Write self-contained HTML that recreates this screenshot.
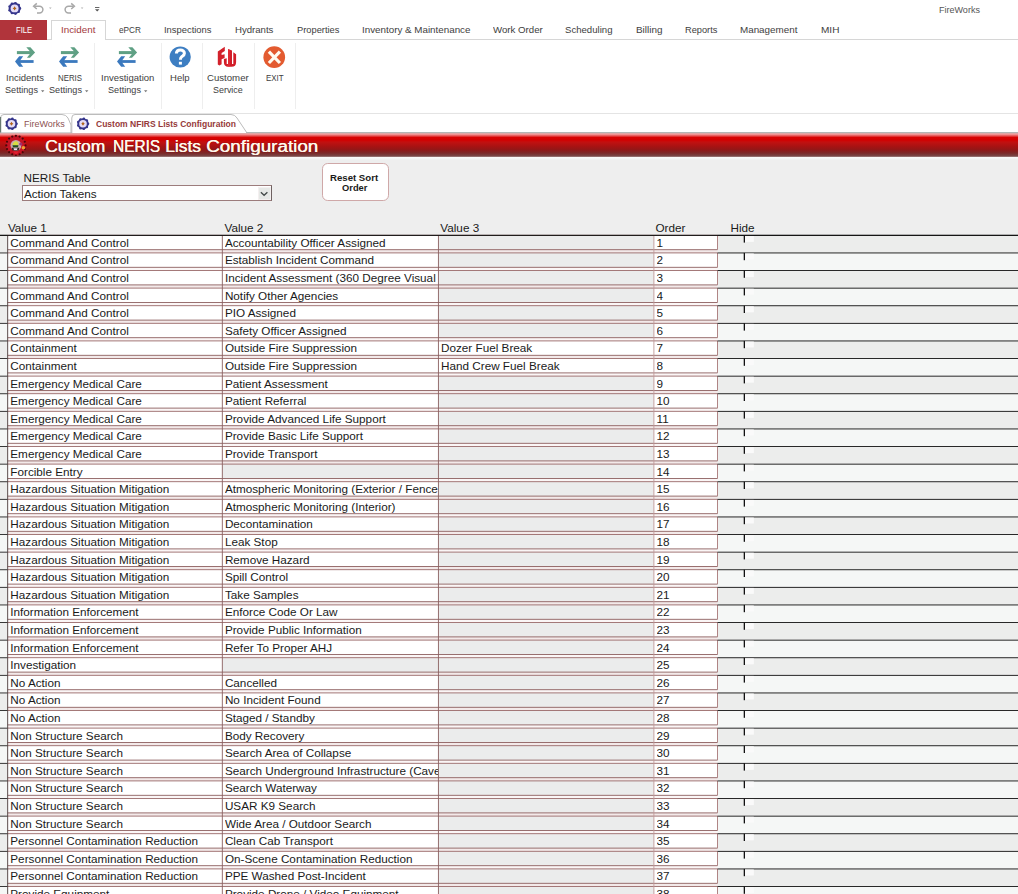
<!DOCTYPE html><html><head><meta charset="utf-8"><style>
*{margin:0;padding:0;box-sizing:border-box}
html,body{width:1018px;height:894px;overflow:hidden;background:#fff;font-family:"Liberation Sans",sans-serif}
.a{position:absolute;white-space:nowrap}
.sep{position:absolute;width:1px;background:#eeeeee;top:43px;height:66px}
</style></head><body>
<svg class="a" style="left:0;top:0" width="110" height="20" viewBox="0 0 110 20"><circle cx="14.6" cy="8.4" r="5.94" fill="#36368c"/><circle cx="19.88" cy="8.40" r="1.32" fill="#36368c"/><circle cx="18.64" cy="11.79" r="1.32" fill="#36368c"/><circle cx="15.52" cy="13.60" r="1.32" fill="#36368c"/><circle cx="11.96" cy="12.97" r="1.32" fill="#36368c"/><circle cx="9.64" cy="10.21" r="1.32" fill="#36368c"/><circle cx="9.64" cy="6.59" r="1.32" fill="#36368c"/><circle cx="11.96" cy="3.83" r="1.32" fill="#36368c"/><circle cx="15.52" cy="3.20" r="1.32" fill="#36368c"/><circle cx="18.64" cy="5.01" r="1.32" fill="#36368c"/><circle cx="14.6" cy="8.4" r="3.96" fill="#e4dcf6"/><path d="M14.6 6.29 L15.92 8.4 L14.6 10.51 L13.28 8.4z" fill="#b0641c"/><path d="M12.49 8.4 L14.6 7.61 L16.71 8.4 L14.6 9.19z" fill="#b0641c"/><path d="M34.5 6.2 h5 a3.4 3.4 0 0 1 0 6.8 h-2.5" fill="none" stroke="#a8a8a8" stroke-width="1.5"/><path d="M36.8 3.4 L33.6 6.2 L36.8 9" stroke="#a8a8a8" stroke-width="1.5" fill="none"/><path d="M49 7.6 h2.6 l-1.3 1.4z" fill="#b0b0b0"/><path d="M73.5 6.2 h-5 a3.4 3.4 0 0 0 0 6.8 h2.5" fill="none" stroke="#a8a8a8" stroke-width="1.5"/><path d="M71.2 3.4 L74.4 6.2 L71.2 9" stroke="#a8a8a8" stroke-width="1.5" fill="none"/><path d="M80.8 7.6 h2.6 l-1.3 1.4z" fill="#b0b0b0"/><rect x="95" y="7" width="4.4" height="0.9" fill="#555"/><path d="M95 9.2 h4.4 l-2.2 2.2z" fill="#555"/></svg>
<div class="a" style="left:938.80px;top:5.10px;font-size:9.5px;line-height:10.611px;color:#555;transform:scaleX(0.9489);transform-origin:0 0">FireWorks</div>
<div class="a" style="left:0;top:20px;width:47px;height:19.5px;background:#b1343b"></div>
<div class="a" style="left:15.70px;top:25.10px;font-size:9.5px;line-height:10.611px;color:#fff;transform:scaleX(0.8075);transform-origin:0 0">FILE</div>
<div class="a" style="left:47px;top:39px;width:971px;height:1px;background:#d6d6d6"></div>
<div class="a" style="left:50.5px;top:20.3px;width:55.8px;height:20px;border:1px solid #d6d6d6;border-bottom:none;background:#fff"></div>
<div class="a" style="left:60.60px;top:25.03px;font-size:9.8px;line-height:10.947px;color:#a3393b;transform:scaleX(1.0022);transform-origin:0 0">Incident</div>
<div class="a" style="left:118.60px;top:25.03px;font-size:9.8px;line-height:10.947px;color:#3e3e3e;transform:scaleX(0.8416);transform-origin:0 0">ePCR</div>
<div class="a" style="left:164.40px;top:25.03px;font-size:9.8px;line-height:10.947px;color:#3e3e3e;transform:scaleX(0.9582);transform-origin:0 0">Inspections</div>
<div class="a" style="left:235.00px;top:25.03px;font-size:9.8px;line-height:10.947px;color:#3e3e3e;transform:scaleX(0.9792);transform-origin:0 0">Hydrants</div>
<div class="a" style="left:296.80px;top:25.03px;font-size:9.8px;line-height:10.947px;color:#3e3e3e;transform:scaleX(0.9493);transform-origin:0 0">Properties</div>
<div class="a" style="left:362.00px;top:25.03px;font-size:9.8px;line-height:10.947px;color:#3e3e3e;transform:scaleX(1.0008);transform-origin:0 0">Inventory &amp; Maintenance</div>
<div class="a" style="left:493.20px;top:25.03px;font-size:9.8px;line-height:10.947px;color:#3e3e3e;transform:scaleX(0.9869);transform-origin:0 0">Work Order</div>
<div class="a" style="left:565.00px;top:25.03px;font-size:9.8px;line-height:10.947px;color:#3e3e3e;transform:scaleX(0.9795);transform-origin:0 0">Scheduling</div>
<div class="a" style="left:636.20px;top:25.03px;font-size:9.8px;line-height:10.947px;color:#3e3e3e;transform:scaleX(1.0097);transform-origin:0 0">Billing</div>
<div class="a" style="left:685.30px;top:25.03px;font-size:9.8px;line-height:10.947px;color:#3e3e3e;transform:scaleX(0.9442);transform-origin:0 0">Reports</div>
<div class="a" style="left:740.40px;top:25.03px;font-size:9.8px;line-height:10.947px;color:#3e3e3e;transform:scaleX(1.0035);transform-origin:0 0">Management</div>
<div class="a" style="left:820.50px;top:25.03px;font-size:9.8px;line-height:10.947px;color:#3e3e3e;transform:scaleX(1.0243);transform-origin:0 0">MIH</div>
<div class="sep" style="left:94.3px"></div>
<div class="sep" style="left:160.7px"></div>
<div class="sep" style="left:201.9px"></div>
<div class="sep" style="left:253.7px"></div>
<div class="sep" style="left:294.6px"></div>
<svg class="a" style="left:0px;top:0" width="40" height="70" viewBox="0 0 40 70"><rect x="16.9" y="51.1" width="15" height="3" fill="#5fa084"/><path d="M26.3 47.2 L30.4 47.2 L35.1 52.6 L30.0 57.8 L26.9 57.8 L31.0 52.6z" fill="#5fa084"/><rect x="18.5" y="60.1" width="15.1" height="2.8" fill="#3b79be"/><path d="M23.2 56.3 L19.2 56.3 L15 61.5 L19.2 66.7 L23.2 66.7 L19.4 61.5z" fill="#3b79be"/></svg>
<svg class="a" style="left:44px;top:0" width="40" height="70" viewBox="0 0 40 70"><rect x="16.9" y="51.1" width="15" height="3" fill="#5fa084"/><path d="M26.3 47.2 L30.4 47.2 L35.1 52.6 L30.0 57.8 L26.9 57.8 L31.0 52.6z" fill="#5fa084"/><rect x="18.5" y="60.1" width="15.1" height="2.8" fill="#3b79be"/><path d="M23.2 56.3 L19.2 56.3 L15 61.5 L19.2 66.7 L23.2 66.7 L19.4 61.5z" fill="#3b79be"/></svg>
<svg class="a" style="left:101.7px;top:0" width="40" height="70" viewBox="0 0 40 70"><rect x="16.9" y="51.1" width="15" height="3" fill="#5fa084"/><path d="M26.3 47.2 L30.4 47.2 L35.1 52.6 L30.0 57.8 L26.9 57.8 L31.0 52.6z" fill="#5fa084"/><rect x="18.5" y="60.1" width="15.1" height="2.8" fill="#3b79be"/><path d="M23.2 56.3 L19.2 56.3 L15 61.5 L19.2 66.7 L23.2 66.7 L19.4 61.5z" fill="#3b79be"/></svg>
<svg class="a" style="left:0;top:0" width="300" height="70" viewBox="0 0 300 70"><circle cx="180.2" cy="57" r="10.6" fill="#3d7ec2"/><path d="M176.4 53.6 C176.4 51 178.3 49.9 180.4 49.9 C182.7 49.9 184.4 51.3 184.4 53.2 C184.4 55.2 182.9 55.8 181.9 56.5 C180.9 57.2 180.4 57.8 180.4 59.8" fill="none" stroke="#fff" stroke-width="3"/><rect x="178.9" y="61.8" width="3" height="2.8" fill="#fff"/><path d="M217.8 51.6 L224.8 46.8 L224.8 50.9 L221.6 52.9 L221.6 55.1 L224.6 54.3 L224.6 58 L221.6 59.2 L221.6 64.2 L219.4 65.6 L217.8 64.6 Z" fill="#d3212b"/><path d="M223.9 59 L226.7 58.3 L226.7 64 L228 64 L228 48.9 L232 50.6 L232 64 L233.3 64 L233.3 52.3 L236.1 54.2 L236.1 62.2 Q236.1 66.7 231.5 66.7 L228.3 66.7 Q223.9 66.7 223.9 62.3 Z" fill="#d21d28"/><path d="M228 48.9 L230 49.7 L230 66.7 L228.3 66.7 Q226 66.7 228 64z" fill="#e8323a" opacity="0.6"/><circle cx="274.25" cy="57.2" r="10.85" fill="#e35b30"/><path d="M268.9 51.7 L279.9 63 M279.9 51.7 L268.9 63" stroke="#fffbf0" stroke-width="3.2"/></svg>
<div class="a" style="left:5.70px;top:73.43px;font-size:9.8px;line-height:10.947px;color:#3e3e3e;transform:scaleX(0.9688);transform-origin:0 0">Incidents</div>
<div class="a" style="left:4.90px;top:85.23px;font-size:9.8px;line-height:10.947px;color:#3e3e3e;transform:scaleX(0.9319);transform-origin:0 0">Settings</div>
<svg class="a" style="left:41.3px;top:90px" width="4" height="3" viewBox="0 0 4 3"><path d="M0 0.3 H3.4 L1.7 2.2z" fill="#777"/></svg>
<div class="a" style="left:57.50px;top:73.43px;font-size:9.8px;line-height:10.947px;color:#3e3e3e;transform:scaleX(0.8013);transform-origin:0 0">NERIS</div>
<div class="a" style="left:49.10px;top:85.23px;font-size:9.8px;line-height:10.947px;color:#3e3e3e;transform:scaleX(0.9319);transform-origin:0 0">Settings</div>
<svg class="a" style="left:85.2px;top:90px" width="4" height="3" viewBox="0 0 4 3"><path d="M0 0.3 H3.4 L1.7 2.2z" fill="#777"/></svg>
<div class="a" style="left:100.60px;top:73.43px;font-size:9.8px;line-height:10.947px;color:#3e3e3e;transform:scaleX(0.9705);transform-origin:0 0">Investigation</div>
<div class="a" style="left:107.70px;top:85.23px;font-size:9.8px;line-height:10.947px;color:#3e3e3e;transform:scaleX(0.9319);transform-origin:0 0">Settings</div>
<svg class="a" style="left:143.8px;top:90px" width="4" height="3" viewBox="0 0 4 3"><path d="M0 0.3 H3.4 L1.7 2.2z" fill="#777"/></svg>
<div class="a" style="left:170.40px;top:73.43px;font-size:9.8px;line-height:10.947px;color:#3e3e3e;transform:scaleX(0.9725);transform-origin:0 0">Help</div>
<div class="a" style="left:206.60px;top:73.43px;font-size:9.8px;line-height:10.947px;color:#3e3e3e;transform:scaleX(0.9817);transform-origin:0 0">Customer</div>
<div class="a" style="left:212.90px;top:85.23px;font-size:9.8px;line-height:10.947px;color:#3e3e3e;transform:scaleX(0.9119);transform-origin:0 0">Service</div>
<div class="a" style="left:265.90px;top:73.43px;font-size:9.8px;line-height:10.947px;color:#3e3e3e;transform:scaleX(0.8126);transform-origin:0 0">EXIT</div>
<div class="a" style="left:0;top:113px;width:1018px;height:1px;background:#e4e4e4"></div>
<svg class="a" style="left:0;top:0" width="260" height="140" viewBox="0 0 260 140"><path d="M0.5 133 L0.5 118 Q0.5 114.5 4 114.5 L62 114.5 Q66 114.5 68 118 L71 125 L71 133" fill="#fff" stroke="#bcbcbc" stroke-width="1"/><path d="M71.8 133 L71.8 118 Q71.8 114.5 75 114.5 L231 114.5 Q235 114.5 237 118 L247 133" fill="#fff" stroke="#bcbcbc" stroke-width="1"/><rect x="0" y="117" width="1.2" height="16" fill="#6a7a72"/><rect x="0" y="132.4" width="72" height="1" fill="#b8b8b8"/><circle cx="11.5" cy="123.8" r="5.67" fill="#36368c"/><circle cx="16.54" cy="123.80" r="1.26" fill="#36368c"/><circle cx="15.36" cy="127.04" r="1.26" fill="#36368c"/><circle cx="12.38" cy="128.76" r="1.26" fill="#36368c"/><circle cx="8.98" cy="128.16" r="1.26" fill="#36368c"/><circle cx="6.76" cy="125.52" r="1.26" fill="#36368c"/><circle cx="6.76" cy="122.08" r="1.26" fill="#36368c"/><circle cx="8.98" cy="119.44" r="1.26" fill="#36368c"/><circle cx="12.38" cy="118.84" r="1.26" fill="#36368c"/><circle cx="15.36" cy="120.56" r="1.26" fill="#36368c"/><circle cx="11.5" cy="123.8" r="3.78" fill="#e4dcf6"/><path d="M11.5 121.78 L12.76 123.8 L11.5 125.82 L10.24 123.8z" fill="#b0641c"/><path d="M9.48 123.8 L11.5 123.04 L13.52 123.8 L11.5 124.56z" fill="#b0641c"/><circle cx="83" cy="123.8" r="5.67" fill="#36368c"/><circle cx="88.04" cy="123.80" r="1.26" fill="#36368c"/><circle cx="86.86" cy="127.04" r="1.26" fill="#36368c"/><circle cx="83.88" cy="128.76" r="1.26" fill="#36368c"/><circle cx="80.48" cy="128.16" r="1.26" fill="#36368c"/><circle cx="78.26" cy="125.52" r="1.26" fill="#36368c"/><circle cx="78.26" cy="122.08" r="1.26" fill="#36368c"/><circle cx="80.48" cy="119.44" r="1.26" fill="#36368c"/><circle cx="83.88" cy="118.84" r="1.26" fill="#36368c"/><circle cx="86.86" cy="120.56" r="1.26" fill="#36368c"/><circle cx="83" cy="123.8" r="3.78" fill="#e4dcf6"/><path d="M83 121.78 L84.26 123.8 L83 125.82 L81.74 123.8z" fill="#b0641c"/><path d="M80.98 123.8 L83 123.04 L85.02 123.8 L83 124.56z" fill="#b0641c"/></svg>
<div class="a" style="left:24.30px;top:118.80px;font-size:9.5px;line-height:10.611px;color:#8e5252;transform:scaleX(0.9466);transform-origin:0 0">FireWorks</div>
<div class="a" style="left:95.60px;top:119.51px;font-size:8.5px;line-height:9.495px;color:#963a3a;font-weight:bold;transform:scaleX(1.0016);transform-origin:0 0">Custom NFIRS Lists Configuration</div>
<div class="a" style="left:0;top:157px;width:1018px;height:737px;background:linear-gradient(#fbfbfb 0px,#f4f4f4 2px,#eeeeee 3px)"></div>
<div class="a" style="left:246px;top:132.2px;width:772px;height:1px;background:#b4b4b4"></div>
<div class="a" style="left:0;top:133.3px;width:1018px;height:23.7px;background:linear-gradient(#d8b0b0 0px,#f09090 1.5px,#d80202 4.5px,#d20000 7px,#c21010 9px,#aa1212 13px,#901818 17px,#7c2828 20px,#7a4242 22.5px,#a08080 24px)"></div>
<svg class="a" style="left:0;top:130px" width="34" height="30" viewBox="0 130 34 30"><circle cx="15.9" cy="145.4" r="10.2" fill="#c41424"/><circle cx="25.50" cy="145.40" r="1.1" fill="#4a0808"/><circle cx="24.77" cy="149.07" r="1.1" fill="#4a0808"/><circle cx="22.69" cy="152.19" r="1.1" fill="#4a0808"/><circle cx="19.57" cy="154.27" r="1.1" fill="#4a0808"/><circle cx="15.90" cy="155.00" r="1.1" fill="#4a0808"/><circle cx="12.23" cy="154.27" r="1.1" fill="#4a0808"/><circle cx="9.11" cy="152.19" r="1.1" fill="#4a0808"/><circle cx="7.03" cy="149.07" r="1.1" fill="#4a0808"/><circle cx="6.30" cy="145.40" r="1.1" fill="#4a0808"/><circle cx="7.03" cy="141.73" r="1.1" fill="#4a0808"/><circle cx="9.11" cy="138.61" r="1.1" fill="#4a0808"/><circle cx="12.23" cy="136.53" r="1.1" fill="#4a0808"/><circle cx="15.90" cy="135.80" r="1.1" fill="#4a0808"/><circle cx="19.57" cy="136.53" r="1.1" fill="#4a0808"/><circle cx="22.69" cy="138.61" r="1.1" fill="#4a0808"/><circle cx="24.77" cy="141.73" r="1.1" fill="#4a0808"/><circle cx="15.9" cy="145.4" r="5.4" fill="#c8a8b0"/><path d="M12.3 145 Q13.5 140.6 17.2 141.5 Q19 142.8 18.2 145z" fill="#d8dc40"/><path d="M12.5 145.3 L18.5 145.3 L18 147.2 L13 147.2z" fill="#205018"/><path d="M11.5 147.8 L19.5 147.8 L18.5 150.5 L12.5 150.5z" fill="#302020"/><path d="M13.5 148.3 L17.5 148.3 L17 150 L14 150z" fill="#e8e0f0"/><circle cx="20.8" cy="144" r="1.6" fill="#a03070"/><circle cx="23.4" cy="147.8" r="1.8" fill="#f0a030"/><path d="M13 151.5 L19 151.5 L16 155z" fill="#e02030"/></svg>
<div class="a" style="left:45.10px;top:138.12px;font-size:16px;line-height:17.872px;color:#fff8ec;transform:scaleX(1.0902);transform-origin:0 0;text-shadow:0.35px 0 0 #fff8ec,0 0 1px rgba(90,0,0,.5)">Custom</div>
<div class="a" style="left:112.80px;top:138.12px;font-size:16px;line-height:17.872px;color:#fff8ec;transform:scaleX(0.9591);transform-origin:0 0;text-shadow:0.35px 0 0 #fff8ec,0 0 1px rgba(90,0,0,.5)">NERIS</div>
<div class="a" style="left:165.20px;top:138.12px;font-size:16px;line-height:17.872px;color:#fff8ec;transform:scaleX(1.0882);transform-origin:0 0;text-shadow:0.35px 0 0 #fff8ec,0 0 1px rgba(90,0,0,.5)">Lists</div>
<div class="a" style="left:205.60px;top:138.12px;font-size:16px;line-height:17.872px;color:#fff8ec;transform:scaleX(1.1779);transform-origin:0 0;text-shadow:0.35px 0 0 #fff8ec,0 0 1px rgba(90,0,0,.5)">Configuration</div>
<div class="a" style="left:23.60px;top:171.38px;font-size:11.73px;line-height:13.102px;color:#1a1a1a">NERIS Table</div>
<div class="a" style="left:22.4px;top:185.2px;width:249.4px;height:15.6px;border:1px solid #9c7c7c;border-right-color:#6e6262;background:#fff"></div>
<div class="a" style="left:23.90px;top:186.68px;font-size:11.73px;line-height:13.102px;color:#1a1a1a">Action Takens</div>
<div class="a" style="left:257.8px;top:186.6px;width:13px;height:13.2px;background:#e6e8e6;border:1px solid #f4f0f0"></div>
<svg class="a" style="left:0;top:0" width="280" height="205" viewBox="0 0 280 205"><path d="M260.9 192.3 L264.1 195.3 L267.4 192.3" fill="none" stroke="#424848" stroke-width="1.3"/></svg>
<div class="a" style="left:321.8px;top:163.2px;width:66.8px;height:38.2px;border:1px solid #cfa8a8;border-radius:5.7px;background:#fff"></div>
<div class="a" style="left:329.90px;top:172.90px;font-size:9.5px;line-height:10.611px;color:#1a1a1a;font-weight:bold;transform:scaleX(1.0123);transform-origin:0 0">Reset Sort</div>
<div class="a" style="left:341.60px;top:182.80px;font-size:9.5px;line-height:10.611px;color:#1a1a1a;font-weight:bold;transform:scaleX(0.9818);transform-origin:0 0">Order</div>
<div class="a" style="left:7.90px;top:220.58px;font-size:11.73px;line-height:13.102px;color:#1a1a1a">Value 1</div>
<div class="a" style="left:224.50px;top:220.58px;font-size:11.73px;line-height:13.102px;color:#1a1a1a">Value 2</div>
<div class="a" style="left:440.30px;top:220.58px;font-size:11.73px;line-height:13.102px;color:#1a1a1a">Value 3</div>
<div class="a" style="left:655.50px;top:220.58px;font-size:11.73px;line-height:13.102px;color:#1a1a1a">Order</div>
<div class="a" style="left:730.50px;top:220.58px;font-size:11.73px;line-height:13.102px;color:#1a1a1a">Hide</div>
<svg class="a" style="left:0;top:0" width="1018" height="894" viewBox="0 0 1018 894"><rect x="0" y="235.30" width="1018" height="17.60" fill="#ecedec"/><rect x="0" y="252.90" width="1018" height="17.60" fill="#f5f7f6"/><rect x="0" y="270.50" width="1018" height="17.60" fill="#ecedec"/><rect x="0" y="288.10" width="1018" height="17.60" fill="#f5f7f6"/><rect x="0" y="305.70" width="1018" height="17.60" fill="#ecedec"/><rect x="0" y="323.30" width="1018" height="17.60" fill="#f5f7f6"/><rect x="0" y="340.90" width="1018" height="17.60" fill="#ecedec"/><rect x="0" y="358.50" width="1018" height="17.60" fill="#f5f7f6"/><rect x="0" y="376.10" width="1018" height="17.60" fill="#ecedec"/><rect x="0" y="393.70" width="1018" height="17.60" fill="#f5f7f6"/><rect x="0" y="411.30" width="1018" height="17.60" fill="#ecedec"/><rect x="0" y="428.90" width="1018" height="17.60" fill="#f5f7f6"/><rect x="0" y="446.50" width="1018" height="17.60" fill="#ecedec"/><rect x="0" y="464.10" width="1018" height="17.60" fill="#f5f7f6"/><rect x="0" y="481.70" width="1018" height="17.60" fill="#ecedec"/><rect x="0" y="499.30" width="1018" height="17.60" fill="#f5f7f6"/><rect x="0" y="516.90" width="1018" height="17.60" fill="#ecedec"/><rect x="0" y="534.50" width="1018" height="17.60" fill="#f5f7f6"/><rect x="0" y="552.10" width="1018" height="17.60" fill="#ecedec"/><rect x="0" y="569.70" width="1018" height="17.60" fill="#f5f7f6"/><rect x="0" y="587.30" width="1018" height="17.60" fill="#ecedec"/><rect x="0" y="604.90" width="1018" height="17.60" fill="#f5f7f6"/><rect x="0" y="622.50" width="1018" height="17.60" fill="#ecedec"/><rect x="0" y="640.10" width="1018" height="17.60" fill="#f5f7f6"/><rect x="0" y="657.70" width="1018" height="17.60" fill="#ecedec"/><rect x="0" y="675.30" width="1018" height="17.60" fill="#f5f7f6"/><rect x="0" y="692.90" width="1018" height="17.60" fill="#ecedec"/><rect x="0" y="710.50" width="1018" height="17.60" fill="#f5f7f6"/><rect x="0" y="728.10" width="1018" height="17.60" fill="#ecedec"/><rect x="0" y="745.70" width="1018" height="17.60" fill="#f5f7f6"/><rect x="0" y="763.30" width="1018" height="17.60" fill="#ecedec"/><rect x="0" y="780.90" width="1018" height="17.60" fill="#f5f7f6"/><rect x="0" y="798.50" width="1018" height="17.60" fill="#ecedec"/><rect x="0" y="816.10" width="1018" height="17.60" fill="#f5f7f6"/><rect x="0" y="833.70" width="1018" height="17.60" fill="#ecedec"/><rect x="0" y="851.30" width="1018" height="17.60" fill="#f5f7f6"/><rect x="0" y="868.90" width="1018" height="17.60" fill="#ecedec"/><rect x="0" y="886.50" width="1018" height="17.60" fill="#f5f7f6"/><rect x="7.7" y="249.70" width="709.8" height="3.20" fill="#f3e9e9"/><rect x="7.70" y="235.30" width="214.60" height="14.40" fill="#ffffff"/><rect x="222.30" y="235.30" width="216.10" height="14.40" fill="#ffffff"/><rect x="438.40" y="235.30" width="215.50" height="14.40" fill="#ebecec"/><rect x="653.90" y="235.30" width="63.60" height="14.40" fill="#ffffff"/><rect x="7.70" y="234.85" width="709.80" height="0.9" fill="#9a6a6a"/><rect x="7.70" y="249.25" width="709.80" height="0.9" fill="#8e6060"/><rect x="717.05" y="235.30" width="0.9" height="14.40" fill="#a87878"/><rect x="0" y="234.90" width="7.70" height="0.9" fill="#222"/><rect x="717.50" y="234.90" width="300.50" height="0.9" fill="#111"/><rect x="744.8" y="235.90" width="9" height="6" fill="#fafafa"/><rect x="743.7" y="235.30" width="1.3" height="7.3" fill="#111"/><rect x="7.7" y="267.30" width="709.8" height="3.20" fill="#fbf6f6"/><rect x="7.70" y="252.90" width="214.60" height="14.40" fill="#ffffff"/><rect x="222.30" y="252.90" width="216.10" height="14.40" fill="#ffffff"/><rect x="438.40" y="252.90" width="215.50" height="14.40" fill="#ebecec"/><rect x="653.90" y="252.90" width="63.60" height="14.40" fill="#ffffff"/><rect x="7.70" y="252.45" width="709.80" height="0.9" fill="#9a6a6a"/><rect x="7.70" y="266.85" width="709.80" height="0.9" fill="#8e6060"/><rect x="717.05" y="252.90" width="0.9" height="14.40" fill="#a87878"/><rect x="0" y="252.50" width="7.70" height="0.9" fill="#222"/><rect x="717.50" y="252.50" width="300.50" height="0.9" fill="#111"/><rect x="744.8" y="253.50" width="9" height="6" fill="#fafafa"/><rect x="743.7" y="252.90" width="1.3" height="7.3" fill="#111"/><rect x="7.7" y="284.90" width="709.8" height="3.20" fill="#f3e9e9"/><rect x="7.70" y="270.50" width="214.60" height="14.40" fill="#ffffff"/><rect x="222.30" y="270.50" width="216.10" height="14.40" fill="#ffffff"/><rect x="438.40" y="270.50" width="215.50" height="14.40" fill="#ebecec"/><rect x="653.90" y="270.50" width="63.60" height="14.40" fill="#ffffff"/><rect x="7.70" y="270.05" width="709.80" height="0.9" fill="#9a6a6a"/><rect x="7.70" y="284.45" width="709.80" height="0.9" fill="#8e6060"/><rect x="717.05" y="270.50" width="0.9" height="14.40" fill="#a87878"/><rect x="0" y="270.10" width="7.70" height="0.9" fill="#222"/><rect x="717.50" y="270.10" width="300.50" height="0.9" fill="#111"/><rect x="744.8" y="271.10" width="9" height="6" fill="#fafafa"/><rect x="743.7" y="270.50" width="1.3" height="7.3" fill="#111"/><rect x="7.7" y="302.50" width="709.8" height="3.20" fill="#fbf6f6"/><rect x="7.70" y="288.10" width="214.60" height="14.40" fill="#ffffff"/><rect x="222.30" y="288.10" width="216.10" height="14.40" fill="#ffffff"/><rect x="438.40" y="288.10" width="215.50" height="14.40" fill="#ebecec"/><rect x="653.90" y="288.10" width="63.60" height="14.40" fill="#ffffff"/><rect x="7.70" y="287.65" width="709.80" height="0.9" fill="#9a6a6a"/><rect x="7.70" y="302.05" width="709.80" height="0.9" fill="#8e6060"/><rect x="717.05" y="288.10" width="0.9" height="14.40" fill="#a87878"/><rect x="0" y="287.70" width="7.70" height="0.9" fill="#222"/><rect x="717.50" y="287.70" width="300.50" height="0.9" fill="#111"/><rect x="744.8" y="288.70" width="9" height="6" fill="#fafafa"/><rect x="743.7" y="288.10" width="1.3" height="7.3" fill="#111"/><rect x="7.7" y="320.10" width="709.8" height="3.20" fill="#f3e9e9"/><rect x="7.70" y="305.70" width="214.60" height="14.40" fill="#ffffff"/><rect x="222.30" y="305.70" width="216.10" height="14.40" fill="#ffffff"/><rect x="438.40" y="305.70" width="215.50" height="14.40" fill="#ebecec"/><rect x="653.90" y="305.70" width="63.60" height="14.40" fill="#ffffff"/><rect x="7.70" y="305.25" width="709.80" height="0.9" fill="#9a6a6a"/><rect x="7.70" y="319.65" width="709.80" height="0.9" fill="#8e6060"/><rect x="717.05" y="305.70" width="0.9" height="14.40" fill="#a87878"/><rect x="0" y="305.30" width="7.70" height="0.9" fill="#222"/><rect x="717.50" y="305.30" width="300.50" height="0.9" fill="#111"/><rect x="744.8" y="306.30" width="9" height="6" fill="#fafafa"/><rect x="743.7" y="305.70" width="1.3" height="7.3" fill="#111"/><rect x="7.7" y="337.70" width="709.8" height="3.20" fill="#fbf6f6"/><rect x="7.70" y="323.30" width="214.60" height="14.40" fill="#ffffff"/><rect x="222.30" y="323.30" width="216.10" height="14.40" fill="#ffffff"/><rect x="438.40" y="323.30" width="215.50" height="14.40" fill="#ebecec"/><rect x="653.90" y="323.30" width="63.60" height="14.40" fill="#ffffff"/><rect x="7.70" y="322.85" width="709.80" height="0.9" fill="#9a6a6a"/><rect x="7.70" y="337.25" width="709.80" height="0.9" fill="#8e6060"/><rect x="717.05" y="323.30" width="0.9" height="14.40" fill="#a87878"/><rect x="0" y="322.90" width="7.70" height="0.9" fill="#222"/><rect x="717.50" y="322.90" width="300.50" height="0.9" fill="#111"/><rect x="744.8" y="323.90" width="9" height="6" fill="#fafafa"/><rect x="743.7" y="323.30" width="1.3" height="7.3" fill="#111"/><rect x="7.7" y="355.30" width="709.8" height="3.20" fill="#f3e9e9"/><rect x="7.70" y="340.90" width="214.60" height="14.40" fill="#ffffff"/><rect x="222.30" y="340.90" width="216.10" height="14.40" fill="#ffffff"/><rect x="438.40" y="340.90" width="215.50" height="14.40" fill="#ffffff"/><rect x="653.90" y="340.90" width="63.60" height="14.40" fill="#ffffff"/><rect x="7.70" y="340.45" width="709.80" height="0.9" fill="#9a6a6a"/><rect x="7.70" y="354.85" width="709.80" height="0.9" fill="#8e6060"/><rect x="717.05" y="340.90" width="0.9" height="14.40" fill="#a87878"/><rect x="0" y="340.50" width="7.70" height="0.9" fill="#222"/><rect x="717.50" y="340.50" width="300.50" height="0.9" fill="#111"/><rect x="744.8" y="341.50" width="9" height="6" fill="#fafafa"/><rect x="743.7" y="340.90" width="1.3" height="7.3" fill="#111"/><rect x="7.7" y="372.90" width="709.8" height="3.20" fill="#fbf6f6"/><rect x="7.70" y="358.50" width="214.60" height="14.40" fill="#ffffff"/><rect x="222.30" y="358.50" width="216.10" height="14.40" fill="#ffffff"/><rect x="438.40" y="358.50" width="215.50" height="14.40" fill="#ffffff"/><rect x="653.90" y="358.50" width="63.60" height="14.40" fill="#ffffff"/><rect x="7.70" y="358.05" width="709.80" height="0.9" fill="#9a6a6a"/><rect x="7.70" y="372.45" width="709.80" height="0.9" fill="#8e6060"/><rect x="717.05" y="358.50" width="0.9" height="14.40" fill="#a87878"/><rect x="0" y="358.10" width="7.70" height="0.9" fill="#222"/><rect x="717.50" y="358.10" width="300.50" height="0.9" fill="#111"/><rect x="744.8" y="359.10" width="9" height="6" fill="#fafafa"/><rect x="743.7" y="358.50" width="1.3" height="7.3" fill="#111"/><rect x="7.7" y="390.50" width="709.8" height="3.20" fill="#f3e9e9"/><rect x="7.70" y="376.10" width="214.60" height="14.40" fill="#ffffff"/><rect x="222.30" y="376.10" width="216.10" height="14.40" fill="#ffffff"/><rect x="438.40" y="376.10" width="215.50" height="14.40" fill="#ebecec"/><rect x="653.90" y="376.10" width="63.60" height="14.40" fill="#ffffff"/><rect x="7.70" y="375.65" width="709.80" height="0.9" fill="#9a6a6a"/><rect x="7.70" y="390.05" width="709.80" height="0.9" fill="#8e6060"/><rect x="717.05" y="376.10" width="0.9" height="14.40" fill="#a87878"/><rect x="0" y="375.70" width="7.70" height="0.9" fill="#222"/><rect x="717.50" y="375.70" width="300.50" height="0.9" fill="#111"/><rect x="744.8" y="376.70" width="9" height="6" fill="#fafafa"/><rect x="743.7" y="376.10" width="1.3" height="7.3" fill="#111"/><rect x="7.7" y="408.10" width="709.8" height="3.20" fill="#fbf6f6"/><rect x="7.70" y="393.70" width="214.60" height="14.40" fill="#ffffff"/><rect x="222.30" y="393.70" width="216.10" height="14.40" fill="#ffffff"/><rect x="438.40" y="393.70" width="215.50" height="14.40" fill="#ebecec"/><rect x="653.90" y="393.70" width="63.60" height="14.40" fill="#ffffff"/><rect x="7.70" y="393.25" width="709.80" height="0.9" fill="#9a6a6a"/><rect x="7.70" y="407.65" width="709.80" height="0.9" fill="#8e6060"/><rect x="717.05" y="393.70" width="0.9" height="14.40" fill="#a87878"/><rect x="0" y="393.30" width="7.70" height="0.9" fill="#222"/><rect x="717.50" y="393.30" width="300.50" height="0.9" fill="#111"/><rect x="744.8" y="394.30" width="9" height="6" fill="#fafafa"/><rect x="743.7" y="393.70" width="1.3" height="7.3" fill="#111"/><rect x="7.7" y="425.70" width="709.8" height="3.20" fill="#f3e9e9"/><rect x="7.70" y="411.30" width="214.60" height="14.40" fill="#ffffff"/><rect x="222.30" y="411.30" width="216.10" height="14.40" fill="#ffffff"/><rect x="438.40" y="411.30" width="215.50" height="14.40" fill="#ebecec"/><rect x="653.90" y="411.30" width="63.60" height="14.40" fill="#ffffff"/><rect x="7.70" y="410.85" width="709.80" height="0.9" fill="#9a6a6a"/><rect x="7.70" y="425.25" width="709.80" height="0.9" fill="#8e6060"/><rect x="717.05" y="411.30" width="0.9" height="14.40" fill="#a87878"/><rect x="0" y="410.90" width="7.70" height="0.9" fill="#222"/><rect x="717.50" y="410.90" width="300.50" height="0.9" fill="#111"/><rect x="744.8" y="411.90" width="9" height="6" fill="#fafafa"/><rect x="743.7" y="411.30" width="1.3" height="7.3" fill="#111"/><rect x="7.7" y="443.30" width="709.8" height="3.20" fill="#fbf6f6"/><rect x="7.70" y="428.90" width="214.60" height="14.40" fill="#ffffff"/><rect x="222.30" y="428.90" width="216.10" height="14.40" fill="#ffffff"/><rect x="438.40" y="428.90" width="215.50" height="14.40" fill="#ebecec"/><rect x="653.90" y="428.90" width="63.60" height="14.40" fill="#ffffff"/><rect x="7.70" y="428.45" width="709.80" height="0.9" fill="#9a6a6a"/><rect x="7.70" y="442.85" width="709.80" height="0.9" fill="#8e6060"/><rect x="717.05" y="428.90" width="0.9" height="14.40" fill="#a87878"/><rect x="0" y="428.50" width="7.70" height="0.9" fill="#222"/><rect x="717.50" y="428.50" width="300.50" height="0.9" fill="#111"/><rect x="744.8" y="429.50" width="9" height="6" fill="#fafafa"/><rect x="743.7" y="428.90" width="1.3" height="7.3" fill="#111"/><rect x="7.7" y="460.90" width="709.8" height="3.20" fill="#f3e9e9"/><rect x="7.70" y="446.50" width="214.60" height="14.40" fill="#ffffff"/><rect x="222.30" y="446.50" width="216.10" height="14.40" fill="#ffffff"/><rect x="438.40" y="446.50" width="215.50" height="14.40" fill="#ebecec"/><rect x="653.90" y="446.50" width="63.60" height="14.40" fill="#ffffff"/><rect x="7.70" y="446.05" width="709.80" height="0.9" fill="#9a6a6a"/><rect x="7.70" y="460.45" width="709.80" height="0.9" fill="#8e6060"/><rect x="717.05" y="446.50" width="0.9" height="14.40" fill="#a87878"/><rect x="0" y="446.10" width="7.70" height="0.9" fill="#222"/><rect x="717.50" y="446.10" width="300.50" height="0.9" fill="#111"/><rect x="744.8" y="447.10" width="9" height="6" fill="#fafafa"/><rect x="743.7" y="446.50" width="1.3" height="7.3" fill="#111"/><rect x="7.7" y="478.50" width="709.8" height="3.20" fill="#fbf6f6"/><rect x="7.70" y="464.10" width="214.60" height="14.40" fill="#ffffff"/><rect x="222.30" y="464.10" width="216.10" height="14.40" fill="#ebecec"/><rect x="438.40" y="464.10" width="215.50" height="14.40" fill="#ebecec"/><rect x="653.90" y="464.10" width="63.60" height="14.40" fill="#ffffff"/><rect x="7.70" y="463.65" width="709.80" height="0.9" fill="#9a6a6a"/><rect x="7.70" y="478.05" width="709.80" height="0.9" fill="#8e6060"/><rect x="717.05" y="464.10" width="0.9" height="14.40" fill="#a87878"/><rect x="0" y="463.70" width="7.70" height="0.9" fill="#222"/><rect x="717.50" y="463.70" width="300.50" height="0.9" fill="#111"/><rect x="744.8" y="464.70" width="9" height="6" fill="#fafafa"/><rect x="743.7" y="464.10" width="1.3" height="7.3" fill="#111"/><rect x="7.7" y="496.10" width="709.8" height="3.20" fill="#f3e9e9"/><rect x="7.70" y="481.70" width="214.60" height="14.40" fill="#ffffff"/><rect x="222.30" y="481.70" width="216.10" height="14.40" fill="#ffffff"/><rect x="438.40" y="481.70" width="215.50" height="14.40" fill="#ebecec"/><rect x="653.90" y="481.70" width="63.60" height="14.40" fill="#ffffff"/><rect x="7.70" y="481.25" width="709.80" height="0.9" fill="#9a6a6a"/><rect x="7.70" y="495.65" width="709.80" height="0.9" fill="#8e6060"/><rect x="717.05" y="481.70" width="0.9" height="14.40" fill="#a87878"/><rect x="0" y="481.30" width="7.70" height="0.9" fill="#222"/><rect x="717.50" y="481.30" width="300.50" height="0.9" fill="#111"/><rect x="744.8" y="482.30" width="9" height="6" fill="#fafafa"/><rect x="743.7" y="481.70" width="1.3" height="7.3" fill="#111"/><rect x="7.7" y="513.70" width="709.8" height="3.20" fill="#fbf6f6"/><rect x="7.70" y="499.30" width="214.60" height="14.40" fill="#ffffff"/><rect x="222.30" y="499.30" width="216.10" height="14.40" fill="#ffffff"/><rect x="438.40" y="499.30" width="215.50" height="14.40" fill="#ebecec"/><rect x="653.90" y="499.30" width="63.60" height="14.40" fill="#ffffff"/><rect x="7.70" y="498.85" width="709.80" height="0.9" fill="#9a6a6a"/><rect x="7.70" y="513.25" width="709.80" height="0.9" fill="#8e6060"/><rect x="717.05" y="499.30" width="0.9" height="14.40" fill="#a87878"/><rect x="0" y="498.90" width="7.70" height="0.9" fill="#222"/><rect x="717.50" y="498.90" width="300.50" height="0.9" fill="#111"/><rect x="744.8" y="499.90" width="9" height="6" fill="#fafafa"/><rect x="743.7" y="499.30" width="1.3" height="7.3" fill="#111"/><rect x="7.7" y="531.30" width="709.8" height="3.20" fill="#f3e9e9"/><rect x="7.70" y="516.90" width="214.60" height="14.40" fill="#ffffff"/><rect x="222.30" y="516.90" width="216.10" height="14.40" fill="#ffffff"/><rect x="438.40" y="516.90" width="215.50" height="14.40" fill="#ebecec"/><rect x="653.90" y="516.90" width="63.60" height="14.40" fill="#ffffff"/><rect x="7.70" y="516.45" width="709.80" height="0.9" fill="#9a6a6a"/><rect x="7.70" y="530.85" width="709.80" height="0.9" fill="#8e6060"/><rect x="717.05" y="516.90" width="0.9" height="14.40" fill="#a87878"/><rect x="0" y="516.50" width="7.70" height="0.9" fill="#222"/><rect x="717.50" y="516.50" width="300.50" height="0.9" fill="#111"/><rect x="744.8" y="517.50" width="9" height="6" fill="#fafafa"/><rect x="743.7" y="516.90" width="1.3" height="7.3" fill="#111"/><rect x="7.7" y="548.90" width="709.8" height="3.20" fill="#fbf6f6"/><rect x="7.70" y="534.50" width="214.60" height="14.40" fill="#ffffff"/><rect x="222.30" y="534.50" width="216.10" height="14.40" fill="#ffffff"/><rect x="438.40" y="534.50" width="215.50" height="14.40" fill="#ebecec"/><rect x="653.90" y="534.50" width="63.60" height="14.40" fill="#ffffff"/><rect x="7.70" y="534.05" width="709.80" height="0.9" fill="#9a6a6a"/><rect x="7.70" y="548.45" width="709.80" height="0.9" fill="#8e6060"/><rect x="717.05" y="534.50" width="0.9" height="14.40" fill="#a87878"/><rect x="0" y="534.10" width="7.70" height="0.9" fill="#222"/><rect x="717.50" y="534.10" width="300.50" height="0.9" fill="#111"/><rect x="744.8" y="535.10" width="9" height="6" fill="#fafafa"/><rect x="743.7" y="534.50" width="1.3" height="7.3" fill="#111"/><rect x="7.7" y="566.50" width="709.8" height="3.20" fill="#f3e9e9"/><rect x="7.70" y="552.10" width="214.60" height="14.40" fill="#ffffff"/><rect x="222.30" y="552.10" width="216.10" height="14.40" fill="#ffffff"/><rect x="438.40" y="552.10" width="215.50" height="14.40" fill="#ebecec"/><rect x="653.90" y="552.10" width="63.60" height="14.40" fill="#ffffff"/><rect x="7.70" y="551.65" width="709.80" height="0.9" fill="#9a6a6a"/><rect x="7.70" y="566.05" width="709.80" height="0.9" fill="#8e6060"/><rect x="717.05" y="552.10" width="0.9" height="14.40" fill="#a87878"/><rect x="0" y="551.70" width="7.70" height="0.9" fill="#222"/><rect x="717.50" y="551.70" width="300.50" height="0.9" fill="#111"/><rect x="744.8" y="552.70" width="9" height="6" fill="#fafafa"/><rect x="743.7" y="552.10" width="1.3" height="7.3" fill="#111"/><rect x="7.7" y="584.10" width="709.8" height="3.20" fill="#fbf6f6"/><rect x="7.70" y="569.70" width="214.60" height="14.40" fill="#ffffff"/><rect x="222.30" y="569.70" width="216.10" height="14.40" fill="#ffffff"/><rect x="438.40" y="569.70" width="215.50" height="14.40" fill="#ebecec"/><rect x="653.90" y="569.70" width="63.60" height="14.40" fill="#ffffff"/><rect x="7.70" y="569.25" width="709.80" height="0.9" fill="#9a6a6a"/><rect x="7.70" y="583.65" width="709.80" height="0.9" fill="#8e6060"/><rect x="717.05" y="569.70" width="0.9" height="14.40" fill="#a87878"/><rect x="0" y="569.30" width="7.70" height="0.9" fill="#222"/><rect x="717.50" y="569.30" width="300.50" height="0.9" fill="#111"/><rect x="744.8" y="570.30" width="9" height="6" fill="#fafafa"/><rect x="743.7" y="569.70" width="1.3" height="7.3" fill="#111"/><rect x="7.7" y="601.70" width="709.8" height="3.20" fill="#f3e9e9"/><rect x="7.70" y="587.30" width="214.60" height="14.40" fill="#ffffff"/><rect x="222.30" y="587.30" width="216.10" height="14.40" fill="#ffffff"/><rect x="438.40" y="587.30" width="215.50" height="14.40" fill="#ebecec"/><rect x="653.90" y="587.30" width="63.60" height="14.40" fill="#ffffff"/><rect x="7.70" y="586.85" width="709.80" height="0.9" fill="#9a6a6a"/><rect x="7.70" y="601.25" width="709.80" height="0.9" fill="#8e6060"/><rect x="717.05" y="587.30" width="0.9" height="14.40" fill="#a87878"/><rect x="0" y="586.90" width="7.70" height="0.9" fill="#222"/><rect x="717.50" y="586.90" width="300.50" height="0.9" fill="#111"/><rect x="744.8" y="587.90" width="9" height="6" fill="#fafafa"/><rect x="743.7" y="587.30" width="1.3" height="7.3" fill="#111"/><rect x="7.7" y="619.30" width="709.8" height="3.20" fill="#fbf6f6"/><rect x="7.70" y="604.90" width="214.60" height="14.40" fill="#ffffff"/><rect x="222.30" y="604.90" width="216.10" height="14.40" fill="#ffffff"/><rect x="438.40" y="604.90" width="215.50" height="14.40" fill="#ebecec"/><rect x="653.90" y="604.90" width="63.60" height="14.40" fill="#ffffff"/><rect x="7.70" y="604.45" width="709.80" height="0.9" fill="#9a6a6a"/><rect x="7.70" y="618.85" width="709.80" height="0.9" fill="#8e6060"/><rect x="717.05" y="604.90" width="0.9" height="14.40" fill="#a87878"/><rect x="0" y="604.50" width="7.70" height="0.9" fill="#222"/><rect x="717.50" y="604.50" width="300.50" height="0.9" fill="#111"/><rect x="744.8" y="605.50" width="9" height="6" fill="#fafafa"/><rect x="743.7" y="604.90" width="1.3" height="7.3" fill="#111"/><rect x="7.7" y="636.90" width="709.8" height="3.20" fill="#f3e9e9"/><rect x="7.70" y="622.50" width="214.60" height="14.40" fill="#ffffff"/><rect x="222.30" y="622.50" width="216.10" height="14.40" fill="#ffffff"/><rect x="438.40" y="622.50" width="215.50" height="14.40" fill="#ebecec"/><rect x="653.90" y="622.50" width="63.60" height="14.40" fill="#ffffff"/><rect x="7.70" y="622.05" width="709.80" height="0.9" fill="#9a6a6a"/><rect x="7.70" y="636.45" width="709.80" height="0.9" fill="#8e6060"/><rect x="717.05" y="622.50" width="0.9" height="14.40" fill="#a87878"/><rect x="0" y="622.10" width="7.70" height="0.9" fill="#222"/><rect x="717.50" y="622.10" width="300.50" height="0.9" fill="#111"/><rect x="744.8" y="623.10" width="9" height="6" fill="#fafafa"/><rect x="743.7" y="622.50" width="1.3" height="7.3" fill="#111"/><rect x="7.7" y="654.50" width="709.8" height="3.20" fill="#fbf6f6"/><rect x="7.70" y="640.10" width="214.60" height="14.40" fill="#ffffff"/><rect x="222.30" y="640.10" width="216.10" height="14.40" fill="#ffffff"/><rect x="438.40" y="640.10" width="215.50" height="14.40" fill="#ebecec"/><rect x="653.90" y="640.10" width="63.60" height="14.40" fill="#ffffff"/><rect x="7.70" y="639.65" width="709.80" height="0.9" fill="#9a6a6a"/><rect x="7.70" y="654.05" width="709.80" height="0.9" fill="#8e6060"/><rect x="717.05" y="640.10" width="0.9" height="14.40" fill="#a87878"/><rect x="0" y="639.70" width="7.70" height="0.9" fill="#222"/><rect x="717.50" y="639.70" width="300.50" height="0.9" fill="#111"/><rect x="744.8" y="640.70" width="9" height="6" fill="#fafafa"/><rect x="743.7" y="640.10" width="1.3" height="7.3" fill="#111"/><rect x="7.7" y="672.10" width="709.8" height="3.20" fill="#f3e9e9"/><rect x="7.70" y="657.70" width="214.60" height="14.40" fill="#ffffff"/><rect x="222.30" y="657.70" width="216.10" height="14.40" fill="#ebecec"/><rect x="438.40" y="657.70" width="215.50" height="14.40" fill="#ebecec"/><rect x="653.90" y="657.70" width="63.60" height="14.40" fill="#ffffff"/><rect x="7.70" y="657.25" width="709.80" height="0.9" fill="#9a6a6a"/><rect x="7.70" y="671.65" width="709.80" height="0.9" fill="#8e6060"/><rect x="717.05" y="657.70" width="0.9" height="14.40" fill="#a87878"/><rect x="0" y="657.30" width="7.70" height="0.9" fill="#222"/><rect x="717.50" y="657.30" width="300.50" height="0.9" fill="#111"/><rect x="744.8" y="658.30" width="9" height="6" fill="#fafafa"/><rect x="743.7" y="657.70" width="1.3" height="7.3" fill="#111"/><rect x="7.7" y="689.70" width="709.8" height="3.20" fill="#fbf6f6"/><rect x="7.70" y="675.30" width="214.60" height="14.40" fill="#ffffff"/><rect x="222.30" y="675.30" width="216.10" height="14.40" fill="#ffffff"/><rect x="438.40" y="675.30" width="215.50" height="14.40" fill="#ebecec"/><rect x="653.90" y="675.30" width="63.60" height="14.40" fill="#ffffff"/><rect x="7.70" y="674.85" width="709.80" height="0.9" fill="#9a6a6a"/><rect x="7.70" y="689.25" width="709.80" height="0.9" fill="#8e6060"/><rect x="717.05" y="675.30" width="0.9" height="14.40" fill="#a87878"/><rect x="0" y="674.90" width="7.70" height="0.9" fill="#222"/><rect x="717.50" y="674.90" width="300.50" height="0.9" fill="#111"/><rect x="744.8" y="675.90" width="9" height="6" fill="#fafafa"/><rect x="743.7" y="675.30" width="1.3" height="7.3" fill="#111"/><rect x="7.7" y="707.30" width="709.8" height="3.20" fill="#f3e9e9"/><rect x="7.70" y="692.90" width="214.60" height="14.40" fill="#ffffff"/><rect x="222.30" y="692.90" width="216.10" height="14.40" fill="#ffffff"/><rect x="438.40" y="692.90" width="215.50" height="14.40" fill="#ebecec"/><rect x="653.90" y="692.90" width="63.60" height="14.40" fill="#ffffff"/><rect x="7.70" y="692.45" width="709.80" height="0.9" fill="#9a6a6a"/><rect x="7.70" y="706.85" width="709.80" height="0.9" fill="#8e6060"/><rect x="717.05" y="692.90" width="0.9" height="14.40" fill="#a87878"/><rect x="0" y="692.50" width="7.70" height="0.9" fill="#222"/><rect x="717.50" y="692.50" width="300.50" height="0.9" fill="#111"/><rect x="744.8" y="693.50" width="9" height="6" fill="#fafafa"/><rect x="743.7" y="692.90" width="1.3" height="7.3" fill="#111"/><rect x="7.7" y="724.90" width="709.8" height="3.20" fill="#fbf6f6"/><rect x="7.70" y="710.50" width="214.60" height="14.40" fill="#ffffff"/><rect x="222.30" y="710.50" width="216.10" height="14.40" fill="#ffffff"/><rect x="438.40" y="710.50" width="215.50" height="14.40" fill="#ebecec"/><rect x="653.90" y="710.50" width="63.60" height="14.40" fill="#ffffff"/><rect x="7.70" y="710.05" width="709.80" height="0.9" fill="#9a6a6a"/><rect x="7.70" y="724.45" width="709.80" height="0.9" fill="#8e6060"/><rect x="717.05" y="710.50" width="0.9" height="14.40" fill="#a87878"/><rect x="0" y="710.10" width="7.70" height="0.9" fill="#222"/><rect x="717.50" y="710.10" width="300.50" height="0.9" fill="#111"/><rect x="744.8" y="711.10" width="9" height="6" fill="#fafafa"/><rect x="743.7" y="710.50" width="1.3" height="7.3" fill="#111"/><rect x="7.7" y="742.50" width="709.8" height="3.20" fill="#f3e9e9"/><rect x="7.70" y="728.10" width="214.60" height="14.40" fill="#ffffff"/><rect x="222.30" y="728.10" width="216.10" height="14.40" fill="#ffffff"/><rect x="438.40" y="728.10" width="215.50" height="14.40" fill="#ebecec"/><rect x="653.90" y="728.10" width="63.60" height="14.40" fill="#ffffff"/><rect x="7.70" y="727.65" width="709.80" height="0.9" fill="#9a6a6a"/><rect x="7.70" y="742.05" width="709.80" height="0.9" fill="#8e6060"/><rect x="717.05" y="728.10" width="0.9" height="14.40" fill="#a87878"/><rect x="0" y="727.70" width="7.70" height="0.9" fill="#222"/><rect x="717.50" y="727.70" width="300.50" height="0.9" fill="#111"/><rect x="744.8" y="728.70" width="9" height="6" fill="#fafafa"/><rect x="743.7" y="728.10" width="1.3" height="7.3" fill="#111"/><rect x="7.7" y="760.10" width="709.8" height="3.20" fill="#fbf6f6"/><rect x="7.70" y="745.70" width="214.60" height="14.40" fill="#ffffff"/><rect x="222.30" y="745.70" width="216.10" height="14.40" fill="#ffffff"/><rect x="438.40" y="745.70" width="215.50" height="14.40" fill="#ebecec"/><rect x="653.90" y="745.70" width="63.60" height="14.40" fill="#ffffff"/><rect x="7.70" y="745.25" width="709.80" height="0.9" fill="#9a6a6a"/><rect x="7.70" y="759.65" width="709.80" height="0.9" fill="#8e6060"/><rect x="717.05" y="745.70" width="0.9" height="14.40" fill="#a87878"/><rect x="0" y="745.30" width="7.70" height="0.9" fill="#222"/><rect x="717.50" y="745.30" width="300.50" height="0.9" fill="#111"/><rect x="744.8" y="746.30" width="9" height="6" fill="#fafafa"/><rect x="743.7" y="745.70" width="1.3" height="7.3" fill="#111"/><rect x="7.7" y="777.70" width="709.8" height="3.20" fill="#f3e9e9"/><rect x="7.70" y="763.30" width="214.60" height="14.40" fill="#ffffff"/><rect x="222.30" y="763.30" width="216.10" height="14.40" fill="#ffffff"/><rect x="438.40" y="763.30" width="215.50" height="14.40" fill="#ebecec"/><rect x="653.90" y="763.30" width="63.60" height="14.40" fill="#ffffff"/><rect x="7.70" y="762.85" width="709.80" height="0.9" fill="#9a6a6a"/><rect x="7.70" y="777.25" width="709.80" height="0.9" fill="#8e6060"/><rect x="717.05" y="763.30" width="0.9" height="14.40" fill="#a87878"/><rect x="0" y="762.90" width="7.70" height="0.9" fill="#222"/><rect x="717.50" y="762.90" width="300.50" height="0.9" fill="#111"/><rect x="744.8" y="763.90" width="9" height="6" fill="#fafafa"/><rect x="743.7" y="763.30" width="1.3" height="7.3" fill="#111"/><rect x="7.7" y="795.30" width="709.8" height="3.20" fill="#fbf6f6"/><rect x="7.70" y="780.90" width="214.60" height="14.40" fill="#ffffff"/><rect x="222.30" y="780.90" width="216.10" height="14.40" fill="#ffffff"/><rect x="438.40" y="780.90" width="215.50" height="14.40" fill="#ebecec"/><rect x="653.90" y="780.90" width="63.60" height="14.40" fill="#ffffff"/><rect x="7.70" y="780.45" width="709.80" height="0.9" fill="#9a6a6a"/><rect x="7.70" y="794.85" width="709.80" height="0.9" fill="#8e6060"/><rect x="717.05" y="780.90" width="0.9" height="14.40" fill="#a87878"/><rect x="0" y="780.50" width="7.70" height="0.9" fill="#222"/><rect x="717.50" y="780.50" width="300.50" height="0.9" fill="#111"/><rect x="744.8" y="781.50" width="9" height="6" fill="#fafafa"/><rect x="743.7" y="780.90" width="1.3" height="7.3" fill="#111"/><rect x="7.7" y="812.90" width="709.8" height="3.20" fill="#f3e9e9"/><rect x="7.70" y="798.50" width="214.60" height="14.40" fill="#ffffff"/><rect x="222.30" y="798.50" width="216.10" height="14.40" fill="#ffffff"/><rect x="438.40" y="798.50" width="215.50" height="14.40" fill="#ebecec"/><rect x="653.90" y="798.50" width="63.60" height="14.40" fill="#ffffff"/><rect x="7.70" y="798.05" width="709.80" height="0.9" fill="#9a6a6a"/><rect x="7.70" y="812.45" width="709.80" height="0.9" fill="#8e6060"/><rect x="717.05" y="798.50" width="0.9" height="14.40" fill="#a87878"/><rect x="0" y="798.10" width="7.70" height="0.9" fill="#222"/><rect x="717.50" y="798.10" width="300.50" height="0.9" fill="#111"/><rect x="744.8" y="799.10" width="9" height="6" fill="#fafafa"/><rect x="743.7" y="798.50" width="1.3" height="7.3" fill="#111"/><rect x="7.7" y="830.50" width="709.8" height="3.20" fill="#fbf6f6"/><rect x="7.70" y="816.10" width="214.60" height="14.40" fill="#ffffff"/><rect x="222.30" y="816.10" width="216.10" height="14.40" fill="#ffffff"/><rect x="438.40" y="816.10" width="215.50" height="14.40" fill="#ebecec"/><rect x="653.90" y="816.10" width="63.60" height="14.40" fill="#ffffff"/><rect x="7.70" y="815.65" width="709.80" height="0.9" fill="#9a6a6a"/><rect x="7.70" y="830.05" width="709.80" height="0.9" fill="#8e6060"/><rect x="717.05" y="816.10" width="0.9" height="14.40" fill="#a87878"/><rect x="0" y="815.70" width="7.70" height="0.9" fill="#222"/><rect x="717.50" y="815.70" width="300.50" height="0.9" fill="#111"/><rect x="744.8" y="816.70" width="9" height="6" fill="#fafafa"/><rect x="743.7" y="816.10" width="1.3" height="7.3" fill="#111"/><rect x="7.7" y="848.10" width="709.8" height="3.20" fill="#f3e9e9"/><rect x="7.70" y="833.70" width="214.60" height="14.40" fill="#ffffff"/><rect x="222.30" y="833.70" width="216.10" height="14.40" fill="#ffffff"/><rect x="438.40" y="833.70" width="215.50" height="14.40" fill="#ebecec"/><rect x="653.90" y="833.70" width="63.60" height="14.40" fill="#ffffff"/><rect x="7.70" y="833.25" width="709.80" height="0.9" fill="#9a6a6a"/><rect x="7.70" y="847.65" width="709.80" height="0.9" fill="#8e6060"/><rect x="717.05" y="833.70" width="0.9" height="14.40" fill="#a87878"/><rect x="0" y="833.30" width="7.70" height="0.9" fill="#222"/><rect x="717.50" y="833.30" width="300.50" height="0.9" fill="#111"/><rect x="744.8" y="834.30" width="9" height="6" fill="#fafafa"/><rect x="743.7" y="833.70" width="1.3" height="7.3" fill="#111"/><rect x="7.7" y="865.70" width="709.8" height="3.20" fill="#fbf6f6"/><rect x="7.70" y="851.30" width="214.60" height="14.40" fill="#ffffff"/><rect x="222.30" y="851.30" width="216.10" height="14.40" fill="#ffffff"/><rect x="438.40" y="851.30" width="215.50" height="14.40" fill="#ebecec"/><rect x="653.90" y="851.30" width="63.60" height="14.40" fill="#ffffff"/><rect x="7.70" y="850.85" width="709.80" height="0.9" fill="#9a6a6a"/><rect x="7.70" y="865.25" width="709.80" height="0.9" fill="#8e6060"/><rect x="717.05" y="851.30" width="0.9" height="14.40" fill="#a87878"/><rect x="0" y="850.90" width="7.70" height="0.9" fill="#222"/><rect x="717.50" y="850.90" width="300.50" height="0.9" fill="#111"/><rect x="744.8" y="851.90" width="9" height="6" fill="#fafafa"/><rect x="743.7" y="851.30" width="1.3" height="7.3" fill="#111"/><rect x="7.7" y="883.30" width="709.8" height="3.20" fill="#f3e9e9"/><rect x="7.70" y="868.90" width="214.60" height="14.40" fill="#ffffff"/><rect x="222.30" y="868.90" width="216.10" height="14.40" fill="#ffffff"/><rect x="438.40" y="868.90" width="215.50" height="14.40" fill="#ebecec"/><rect x="653.90" y="868.90" width="63.60" height="14.40" fill="#ffffff"/><rect x="7.70" y="868.45" width="709.80" height="0.9" fill="#9a6a6a"/><rect x="7.70" y="882.85" width="709.80" height="0.9" fill="#8e6060"/><rect x="717.05" y="868.90" width="0.9" height="14.40" fill="#a87878"/><rect x="0" y="868.50" width="7.70" height="0.9" fill="#222"/><rect x="717.50" y="868.50" width="300.50" height="0.9" fill="#111"/><rect x="744.8" y="869.50" width="9" height="6" fill="#fafafa"/><rect x="743.7" y="868.90" width="1.3" height="7.3" fill="#111"/><rect x="7.7" y="900.90" width="709.8" height="3.20" fill="#fbf6f6"/><rect x="7.70" y="886.50" width="214.60" height="14.40" fill="#ffffff"/><rect x="222.30" y="886.50" width="216.10" height="14.40" fill="#ffffff"/><rect x="438.40" y="886.50" width="215.50" height="14.40" fill="#ebecec"/><rect x="653.90" y="886.50" width="63.60" height="14.40" fill="#ffffff"/><rect x="7.70" y="886.05" width="709.80" height="0.9" fill="#9a6a6a"/><rect x="7.70" y="900.45" width="709.80" height="0.9" fill="#8e6060"/><rect x="717.05" y="886.50" width="0.9" height="14.40" fill="#a87878"/><rect x="0" y="886.10" width="7.70" height="0.9" fill="#222"/><rect x="717.50" y="886.10" width="300.50" height="0.9" fill="#111"/><rect x="744.8" y="887.10" width="9" height="6" fill="#fafafa"/><rect x="743.7" y="886.50" width="1.3" height="7.3" fill="#111"/><rect x="7.25" y="235.30" width="0.9" height="658.70" fill="#4a3a3a"/><rect x="221.85" y="235.30" width="0.9" height="658.70" fill="#8a6060"/><rect x="437.95" y="235.30" width="0.9" height="658.70" fill="#8a6060"/><rect x="653.45" y="235.30" width="0.9" height="658.70" fill="#c09a9a"/><rect x="0" y="234.80" width="1018" height="1.1" fill="#111"/></svg>
<div class="a" style="left:10.30px;top:235.78px;width:211.4px;overflow:hidden;font-size:11.73px;line-height:13.102px;color:#1a1a1a">Command And Control</div>
<div class="a" style="left:224.90px;top:235.78px;width:212.9px;overflow:hidden;font-size:11.73px;line-height:13.102px;color:#1a1a1a">Accountability Officer Assigned</div>
<div class="a" style="left:656.50px;top:235.78px;width:60.4px;overflow:hidden;font-size:11.73px;line-height:13.102px;color:#1a1a1a">1</div>
<div class="a" style="left:10.30px;top:253.38px;width:211.4px;overflow:hidden;font-size:11.73px;line-height:13.102px;color:#1a1a1a">Command And Control</div>
<div class="a" style="left:224.90px;top:253.38px;width:212.9px;overflow:hidden;font-size:11.73px;line-height:13.102px;color:#1a1a1a">Establish Incident Command</div>
<div class="a" style="left:656.50px;top:253.38px;width:60.4px;overflow:hidden;font-size:11.73px;line-height:13.102px;color:#1a1a1a">2</div>
<div class="a" style="left:10.30px;top:270.98px;width:211.4px;overflow:hidden;font-size:11.73px;line-height:13.102px;color:#1a1a1a">Command And Control</div>
<div class="a" style="left:224.90px;top:270.98px;width:212.9px;overflow:hidden;font-size:11.73px;line-height:13.102px;color:#1a1a1a">Incident Assessment (360 Degree Visual</div>
<div class="a" style="left:656.50px;top:270.98px;width:60.4px;overflow:hidden;font-size:11.73px;line-height:13.102px;color:#1a1a1a">3</div>
<div class="a" style="left:10.30px;top:288.58px;width:211.4px;overflow:hidden;font-size:11.73px;line-height:13.102px;color:#1a1a1a">Command And Control</div>
<div class="a" style="left:224.90px;top:288.58px;width:212.9px;overflow:hidden;font-size:11.73px;line-height:13.102px;color:#1a1a1a">Notify Other Agencies</div>
<div class="a" style="left:656.50px;top:288.58px;width:60.4px;overflow:hidden;font-size:11.73px;line-height:13.102px;color:#1a1a1a">4</div>
<div class="a" style="left:10.30px;top:306.18px;width:211.4px;overflow:hidden;font-size:11.73px;line-height:13.102px;color:#1a1a1a">Command And Control</div>
<div class="a" style="left:224.90px;top:306.18px;width:212.9px;overflow:hidden;font-size:11.73px;line-height:13.102px;color:#1a1a1a">PIO Assigned</div>
<div class="a" style="left:656.50px;top:306.18px;width:60.4px;overflow:hidden;font-size:11.73px;line-height:13.102px;color:#1a1a1a">5</div>
<div class="a" style="left:10.30px;top:323.78px;width:211.4px;overflow:hidden;font-size:11.73px;line-height:13.102px;color:#1a1a1a">Command And Control</div>
<div class="a" style="left:224.90px;top:323.78px;width:212.9px;overflow:hidden;font-size:11.73px;line-height:13.102px;color:#1a1a1a">Safety Officer Assigned</div>
<div class="a" style="left:656.50px;top:323.78px;width:60.4px;overflow:hidden;font-size:11.73px;line-height:13.102px;color:#1a1a1a">6</div>
<div class="a" style="left:10.30px;top:341.38px;width:211.4px;overflow:hidden;font-size:11.73px;line-height:13.102px;color:#1a1a1a">Containment</div>
<div class="a" style="left:224.90px;top:341.38px;width:212.9px;overflow:hidden;font-size:11.73px;line-height:13.102px;color:#1a1a1a">Outside Fire Suppression</div>
<div class="a" style="left:441.00px;top:341.38px;width:212.3px;overflow:hidden;font-size:11.73px;line-height:13.102px;color:#1a1a1a">Dozer Fuel Break</div>
<div class="a" style="left:656.50px;top:341.38px;width:60.4px;overflow:hidden;font-size:11.73px;line-height:13.102px;color:#1a1a1a">7</div>
<div class="a" style="left:10.30px;top:358.98px;width:211.4px;overflow:hidden;font-size:11.73px;line-height:13.102px;color:#1a1a1a">Containment</div>
<div class="a" style="left:224.90px;top:358.98px;width:212.9px;overflow:hidden;font-size:11.73px;line-height:13.102px;color:#1a1a1a">Outside Fire Suppression</div>
<div class="a" style="left:441.00px;top:358.98px;width:212.3px;overflow:hidden;font-size:11.73px;line-height:13.102px;color:#1a1a1a">Hand Crew Fuel Break</div>
<div class="a" style="left:656.50px;top:358.98px;width:60.4px;overflow:hidden;font-size:11.73px;line-height:13.102px;color:#1a1a1a">8</div>
<div class="a" style="left:10.30px;top:376.58px;width:211.4px;overflow:hidden;font-size:11.73px;line-height:13.102px;color:#1a1a1a">Emergency Medical Care</div>
<div class="a" style="left:224.90px;top:376.58px;width:212.9px;overflow:hidden;font-size:11.73px;line-height:13.102px;color:#1a1a1a">Patient Assessment</div>
<div class="a" style="left:656.50px;top:376.58px;width:60.4px;overflow:hidden;font-size:11.73px;line-height:13.102px;color:#1a1a1a">9</div>
<div class="a" style="left:10.30px;top:394.18px;width:211.4px;overflow:hidden;font-size:11.73px;line-height:13.102px;color:#1a1a1a">Emergency Medical Care</div>
<div class="a" style="left:224.90px;top:394.18px;width:212.9px;overflow:hidden;font-size:11.73px;line-height:13.102px;color:#1a1a1a">Patient Referral</div>
<div class="a" style="left:656.50px;top:394.18px;width:60.4px;overflow:hidden;font-size:11.73px;line-height:13.102px;color:#1a1a1a">10</div>
<div class="a" style="left:10.30px;top:411.78px;width:211.4px;overflow:hidden;font-size:11.73px;line-height:13.102px;color:#1a1a1a">Emergency Medical Care</div>
<div class="a" style="left:224.90px;top:411.78px;width:212.9px;overflow:hidden;font-size:11.73px;line-height:13.102px;color:#1a1a1a">Provide Advanced Life Support</div>
<div class="a" style="left:656.50px;top:411.78px;width:60.4px;overflow:hidden;font-size:11.73px;line-height:13.102px;color:#1a1a1a">11</div>
<div class="a" style="left:10.30px;top:429.38px;width:211.4px;overflow:hidden;font-size:11.73px;line-height:13.102px;color:#1a1a1a">Emergency Medical Care</div>
<div class="a" style="left:224.90px;top:429.38px;width:212.9px;overflow:hidden;font-size:11.73px;line-height:13.102px;color:#1a1a1a">Provide Basic Life Support</div>
<div class="a" style="left:656.50px;top:429.38px;width:60.4px;overflow:hidden;font-size:11.73px;line-height:13.102px;color:#1a1a1a">12</div>
<div class="a" style="left:10.30px;top:446.98px;width:211.4px;overflow:hidden;font-size:11.73px;line-height:13.102px;color:#1a1a1a">Emergency Medical Care</div>
<div class="a" style="left:224.90px;top:446.98px;width:212.9px;overflow:hidden;font-size:11.73px;line-height:13.102px;color:#1a1a1a">Provide Transport</div>
<div class="a" style="left:656.50px;top:446.98px;width:60.4px;overflow:hidden;font-size:11.73px;line-height:13.102px;color:#1a1a1a">13</div>
<div class="a" style="left:10.30px;top:464.58px;width:211.4px;overflow:hidden;font-size:11.73px;line-height:13.102px;color:#1a1a1a">Forcible Entry</div>
<div class="a" style="left:656.50px;top:464.58px;width:60.4px;overflow:hidden;font-size:11.73px;line-height:13.102px;color:#1a1a1a">14</div>
<div class="a" style="left:10.30px;top:482.18px;width:211.4px;overflow:hidden;font-size:11.73px;line-height:13.102px;color:#1a1a1a">Hazardous Situation Mitigation</div>
<div class="a" style="left:224.90px;top:482.18px;width:212.9px;overflow:hidden;font-size:11.73px;line-height:13.102px;color:#1a1a1a">Atmospheric Monitoring (Exterior / Fence</div>
<div class="a" style="left:656.50px;top:482.18px;width:60.4px;overflow:hidden;font-size:11.73px;line-height:13.102px;color:#1a1a1a">15</div>
<div class="a" style="left:10.30px;top:499.78px;width:211.4px;overflow:hidden;font-size:11.73px;line-height:13.102px;color:#1a1a1a">Hazardous Situation Mitigation</div>
<div class="a" style="left:224.90px;top:499.78px;width:212.9px;overflow:hidden;font-size:11.73px;line-height:13.102px;color:#1a1a1a">Atmospheric Monitoring (Interior)</div>
<div class="a" style="left:656.50px;top:499.78px;width:60.4px;overflow:hidden;font-size:11.73px;line-height:13.102px;color:#1a1a1a">16</div>
<div class="a" style="left:10.30px;top:517.38px;width:211.4px;overflow:hidden;font-size:11.73px;line-height:13.102px;color:#1a1a1a">Hazardous Situation Mitigation</div>
<div class="a" style="left:224.90px;top:517.38px;width:212.9px;overflow:hidden;font-size:11.73px;line-height:13.102px;color:#1a1a1a">Decontamination</div>
<div class="a" style="left:656.50px;top:517.38px;width:60.4px;overflow:hidden;font-size:11.73px;line-height:13.102px;color:#1a1a1a">17</div>
<div class="a" style="left:10.30px;top:534.98px;width:211.4px;overflow:hidden;font-size:11.73px;line-height:13.102px;color:#1a1a1a">Hazardous Situation Mitigation</div>
<div class="a" style="left:224.90px;top:534.98px;width:212.9px;overflow:hidden;font-size:11.73px;line-height:13.102px;color:#1a1a1a">Leak Stop</div>
<div class="a" style="left:656.50px;top:534.98px;width:60.4px;overflow:hidden;font-size:11.73px;line-height:13.102px;color:#1a1a1a">18</div>
<div class="a" style="left:10.30px;top:552.58px;width:211.4px;overflow:hidden;font-size:11.73px;line-height:13.102px;color:#1a1a1a">Hazardous Situation Mitigation</div>
<div class="a" style="left:224.90px;top:552.58px;width:212.9px;overflow:hidden;font-size:11.73px;line-height:13.102px;color:#1a1a1a">Remove Hazard</div>
<div class="a" style="left:656.50px;top:552.58px;width:60.4px;overflow:hidden;font-size:11.73px;line-height:13.102px;color:#1a1a1a">19</div>
<div class="a" style="left:10.30px;top:570.18px;width:211.4px;overflow:hidden;font-size:11.73px;line-height:13.102px;color:#1a1a1a">Hazardous Situation Mitigation</div>
<div class="a" style="left:224.90px;top:570.18px;width:212.9px;overflow:hidden;font-size:11.73px;line-height:13.102px;color:#1a1a1a">Spill Control</div>
<div class="a" style="left:656.50px;top:570.18px;width:60.4px;overflow:hidden;font-size:11.73px;line-height:13.102px;color:#1a1a1a">20</div>
<div class="a" style="left:10.30px;top:587.78px;width:211.4px;overflow:hidden;font-size:11.73px;line-height:13.102px;color:#1a1a1a">Hazardous Situation Mitigation</div>
<div class="a" style="left:224.90px;top:587.78px;width:212.9px;overflow:hidden;font-size:11.73px;line-height:13.102px;color:#1a1a1a">Take Samples</div>
<div class="a" style="left:656.50px;top:587.78px;width:60.4px;overflow:hidden;font-size:11.73px;line-height:13.102px;color:#1a1a1a">21</div>
<div class="a" style="left:10.30px;top:605.38px;width:211.4px;overflow:hidden;font-size:11.73px;line-height:13.102px;color:#1a1a1a">Information Enforcement</div>
<div class="a" style="left:224.90px;top:605.38px;width:212.9px;overflow:hidden;font-size:11.73px;line-height:13.102px;color:#1a1a1a">Enforce Code Or Law</div>
<div class="a" style="left:656.50px;top:605.38px;width:60.4px;overflow:hidden;font-size:11.73px;line-height:13.102px;color:#1a1a1a">22</div>
<div class="a" style="left:10.30px;top:622.98px;width:211.4px;overflow:hidden;font-size:11.73px;line-height:13.102px;color:#1a1a1a">Information Enforcement</div>
<div class="a" style="left:224.90px;top:622.98px;width:212.9px;overflow:hidden;font-size:11.73px;line-height:13.102px;color:#1a1a1a">Provide Public Information</div>
<div class="a" style="left:656.50px;top:622.98px;width:60.4px;overflow:hidden;font-size:11.73px;line-height:13.102px;color:#1a1a1a">23</div>
<div class="a" style="left:10.30px;top:640.58px;width:211.4px;overflow:hidden;font-size:11.73px;line-height:13.102px;color:#1a1a1a">Information Enforcement</div>
<div class="a" style="left:224.90px;top:640.58px;width:212.9px;overflow:hidden;font-size:11.73px;line-height:13.102px;color:#1a1a1a">Refer To Proper AHJ</div>
<div class="a" style="left:656.50px;top:640.58px;width:60.4px;overflow:hidden;font-size:11.73px;line-height:13.102px;color:#1a1a1a">24</div>
<div class="a" style="left:10.30px;top:658.18px;width:211.4px;overflow:hidden;font-size:11.73px;line-height:13.102px;color:#1a1a1a">Investigation</div>
<div class="a" style="left:656.50px;top:658.18px;width:60.4px;overflow:hidden;font-size:11.73px;line-height:13.102px;color:#1a1a1a">25</div>
<div class="a" style="left:10.30px;top:675.78px;width:211.4px;overflow:hidden;font-size:11.73px;line-height:13.102px;color:#1a1a1a">No Action</div>
<div class="a" style="left:224.90px;top:675.78px;width:212.9px;overflow:hidden;font-size:11.73px;line-height:13.102px;color:#1a1a1a">Cancelled</div>
<div class="a" style="left:656.50px;top:675.78px;width:60.4px;overflow:hidden;font-size:11.73px;line-height:13.102px;color:#1a1a1a">26</div>
<div class="a" style="left:10.30px;top:693.38px;width:211.4px;overflow:hidden;font-size:11.73px;line-height:13.102px;color:#1a1a1a">No Action</div>
<div class="a" style="left:224.90px;top:693.38px;width:212.9px;overflow:hidden;font-size:11.73px;line-height:13.102px;color:#1a1a1a">No Incident Found</div>
<div class="a" style="left:656.50px;top:693.38px;width:60.4px;overflow:hidden;font-size:11.73px;line-height:13.102px;color:#1a1a1a">27</div>
<div class="a" style="left:10.30px;top:710.98px;width:211.4px;overflow:hidden;font-size:11.73px;line-height:13.102px;color:#1a1a1a">No Action</div>
<div class="a" style="left:224.90px;top:710.98px;width:212.9px;overflow:hidden;font-size:11.73px;line-height:13.102px;color:#1a1a1a">Staged / Standby</div>
<div class="a" style="left:656.50px;top:710.98px;width:60.4px;overflow:hidden;font-size:11.73px;line-height:13.102px;color:#1a1a1a">28</div>
<div class="a" style="left:10.30px;top:728.58px;width:211.4px;overflow:hidden;font-size:11.73px;line-height:13.102px;color:#1a1a1a">Non Structure Search</div>
<div class="a" style="left:224.90px;top:728.58px;width:212.9px;overflow:hidden;font-size:11.73px;line-height:13.102px;color:#1a1a1a">Body Recovery</div>
<div class="a" style="left:656.50px;top:728.58px;width:60.4px;overflow:hidden;font-size:11.73px;line-height:13.102px;color:#1a1a1a">29</div>
<div class="a" style="left:10.30px;top:746.18px;width:211.4px;overflow:hidden;font-size:11.73px;line-height:13.102px;color:#1a1a1a">Non Structure Search</div>
<div class="a" style="left:224.90px;top:746.18px;width:212.9px;overflow:hidden;font-size:11.73px;line-height:13.102px;color:#1a1a1a">Search Area of Collapse</div>
<div class="a" style="left:656.50px;top:746.18px;width:60.4px;overflow:hidden;font-size:11.73px;line-height:13.102px;color:#1a1a1a">30</div>
<div class="a" style="left:10.30px;top:763.78px;width:211.4px;overflow:hidden;font-size:11.73px;line-height:13.102px;color:#1a1a1a">Non Structure Search</div>
<div class="a" style="left:224.90px;top:763.78px;width:212.9px;overflow:hidden;font-size:11.73px;line-height:13.102px;color:#1a1a1a">Search Underground Infrastructure (Cave</div>
<div class="a" style="left:656.50px;top:763.78px;width:60.4px;overflow:hidden;font-size:11.73px;line-height:13.102px;color:#1a1a1a">31</div>
<div class="a" style="left:10.30px;top:781.38px;width:211.4px;overflow:hidden;font-size:11.73px;line-height:13.102px;color:#1a1a1a">Non Structure Search</div>
<div class="a" style="left:224.90px;top:781.38px;width:212.9px;overflow:hidden;font-size:11.73px;line-height:13.102px;color:#1a1a1a">Search Waterway</div>
<div class="a" style="left:656.50px;top:781.38px;width:60.4px;overflow:hidden;font-size:11.73px;line-height:13.102px;color:#1a1a1a">32</div>
<div class="a" style="left:10.30px;top:798.98px;width:211.4px;overflow:hidden;font-size:11.73px;line-height:13.102px;color:#1a1a1a">Non Structure Search</div>
<div class="a" style="left:224.90px;top:798.98px;width:212.9px;overflow:hidden;font-size:11.73px;line-height:13.102px;color:#1a1a1a">USAR K9 Search</div>
<div class="a" style="left:656.50px;top:798.98px;width:60.4px;overflow:hidden;font-size:11.73px;line-height:13.102px;color:#1a1a1a">33</div>
<div class="a" style="left:10.30px;top:816.58px;width:211.4px;overflow:hidden;font-size:11.73px;line-height:13.102px;color:#1a1a1a">Non Structure Search</div>
<div class="a" style="left:224.90px;top:816.58px;width:212.9px;overflow:hidden;font-size:11.73px;line-height:13.102px;color:#1a1a1a">Wide Area / Outdoor Search</div>
<div class="a" style="left:656.50px;top:816.58px;width:60.4px;overflow:hidden;font-size:11.73px;line-height:13.102px;color:#1a1a1a">34</div>
<div class="a" style="left:10.30px;top:834.18px;width:211.4px;overflow:hidden;font-size:11.73px;line-height:13.102px;color:#1a1a1a">Personnel Contamination Reduction</div>
<div class="a" style="left:224.90px;top:834.18px;width:212.9px;overflow:hidden;font-size:11.73px;line-height:13.102px;color:#1a1a1a">Clean Cab Transport</div>
<div class="a" style="left:656.50px;top:834.18px;width:60.4px;overflow:hidden;font-size:11.73px;line-height:13.102px;color:#1a1a1a">35</div>
<div class="a" style="left:10.30px;top:851.78px;width:211.4px;overflow:hidden;font-size:11.73px;line-height:13.102px;color:#1a1a1a">Personnel Contamination Reduction</div>
<div class="a" style="left:224.90px;top:851.78px;width:212.9px;overflow:hidden;font-size:11.73px;line-height:13.102px;color:#1a1a1a">On-Scene Contamination Reduction</div>
<div class="a" style="left:656.50px;top:851.78px;width:60.4px;overflow:hidden;font-size:11.73px;line-height:13.102px;color:#1a1a1a">36</div>
<div class="a" style="left:10.30px;top:869.38px;width:211.4px;overflow:hidden;font-size:11.73px;line-height:13.102px;color:#1a1a1a">Personnel Contamination Reduction</div>
<div class="a" style="left:224.90px;top:869.38px;width:212.9px;overflow:hidden;font-size:11.73px;line-height:13.102px;color:#1a1a1a">PPE Washed Post-Incident</div>
<div class="a" style="left:656.50px;top:869.38px;width:60.4px;overflow:hidden;font-size:11.73px;line-height:13.102px;color:#1a1a1a">37</div>
<div class="a" style="left:10.30px;top:886.98px;width:211.4px;overflow:hidden;font-size:11.73px;line-height:13.102px;color:#1a1a1a">Provide Equipment</div>
<div class="a" style="left:224.90px;top:886.98px;width:212.9px;overflow:hidden;font-size:11.73px;line-height:13.102px;color:#1a1a1a">Provide Drone / Video Equipment</div>
<div class="a" style="left:656.50px;top:886.98px;width:60.4px;overflow:hidden;font-size:11.73px;line-height:13.102px;color:#1a1a1a">38</div>
</body></html>
